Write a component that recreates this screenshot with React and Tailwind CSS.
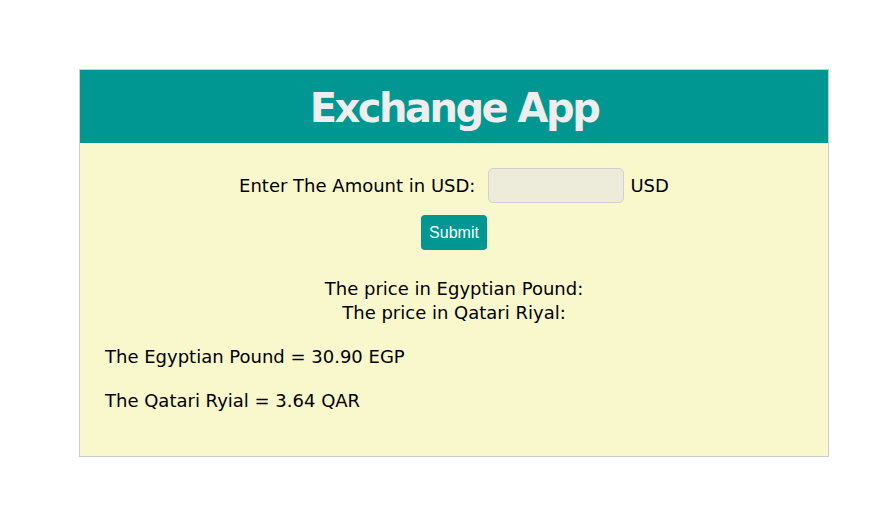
export default function App() {
  return (
    <div className="min-h-[527px] bg-white pt-[69px] px-[79px]" style={{ fontFamily: '"DejaVu Sans", sans-serif' }}>
      <div className="w-[750px] border border-[#cccccc] bg-[#f8f8cc] h-[388px]">
        <div className="bg-[#009691] h-[73px] flex items-center justify-center">
          <h1 className="text-[40px] font-bold text-[#eeeeee] leading-none tracking-[-2.5px] pt-[3px]">Exchange App</h1>
        </div>
        <div className="flex flex-col items-center pt-[25px] text-[18px] text-black">
          <div className="flex items-center">
            <span>Enter The Amount in USD:</span>
            <input className="ml-[13px] w-[136px] h-[35px] bg-[#edebd9] border border-[#cfcfcf] rounded-[5px]" />
            <span className="ml-[6px]">USD</span>
          </div>
          <button className="mt-[12px] h-[35px] px-[8px] bg-[#009691] text-white text-[16px] rounded-[4px]" style={{ fontFamily: '"Liberation Sans", sans-serif' }}>Submit</button>
          <div className="mt-[27px] text-center leading-[24px]">
            <div>The price in Egyptian Pound:</div>
            <div>The price in Qatari Riyal:</div>
          </div>
          <div className="self-stretch px-[25px] mt-[20px]">
            <p className="leading-[24px]">The Egyptian Pound = 30.90 EGP</p>
            <p className="leading-[24px] mt-[20px]">The Qatari Ryial = 3.64 QAR</p>
          </div>
        </div>
      </div>
    </div>
  );
}
